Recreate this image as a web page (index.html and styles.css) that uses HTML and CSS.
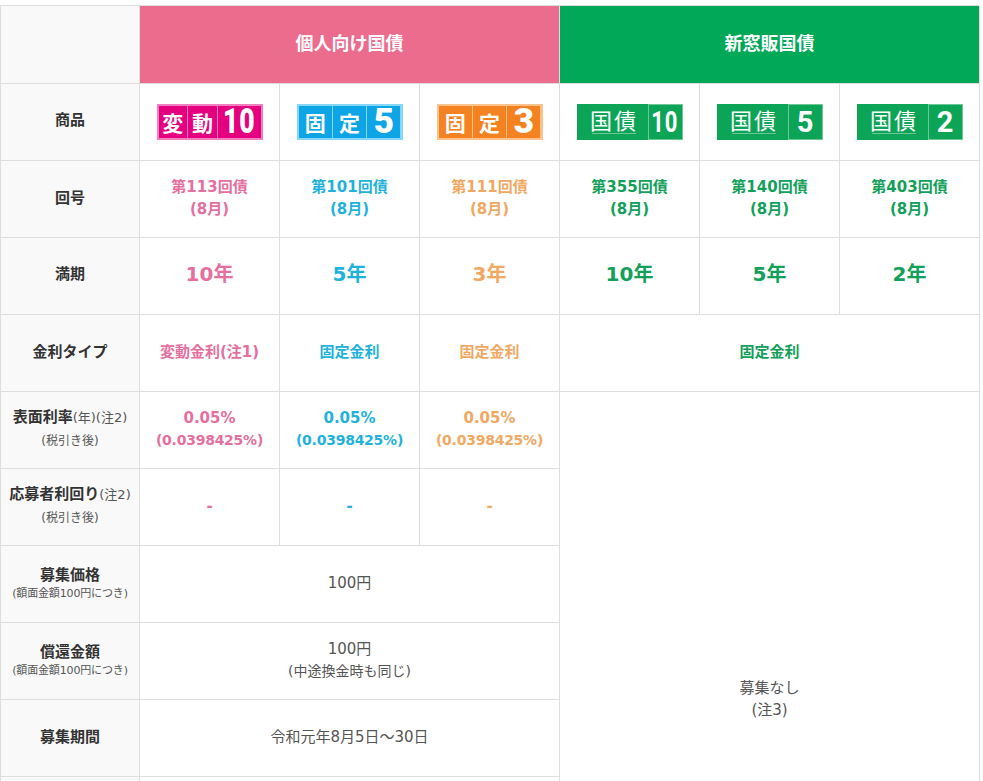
FILE: index.html
```html
<!DOCTYPE html>
<html lang="ja">
<head>
<meta charset="utf-8">
<title>個人向け国債・新窓販国債</title>
<link rel="stylesheet" href="styles.css">
</head>
<body>
<table class="bonds">
<colgroup><col class="c0"><col class="c"><col class="c"><col class="c"><col class="c"><col class="c"><col class="c"></colgroup>
<tr class="top">
  <th class="side"></th>
  <th colspan="3" class="head-pink">個人向け国債</th>
  <th colspan="3" class="head-green">新窓販国債</th>
</tr>
<tr>
  <th class="side lift">商品</th>
  <td class="logo-cell"><div class="logo logo-tri bg-magenta"><span>変</span><span>動</span><span class="num"><b class="narrow">10</b></span></div></td>
  <td class="logo-cell"><div class="logo logo-tri bg-blue"><span>固</span><span>定</span><span class="num"><b>5</b></span></div></td>
  <td class="logo-cell"><div class="logo logo-tri bg-orange"><span>固</span><span>定</span><span class="num"><b>3</b></span></div></td>
  <td class="logo-cell"><div class="logo logo-jgb"><span class="jgb">国債</span><span class="num"><b class="narrow">10</b></span></div></td>
  <td class="logo-cell"><div class="logo logo-jgb"><span class="jgb">国債</span><span class="num"><b>5</b></span></div></td>
  <td class="logo-cell"><div class="logo logo-jgb"><span class="jgb">国債</span><span class="num"><b>2</b></span></div></td>
</tr>
<tr>
  <th class="side">回号</th>
  <td class="val pink">第113回債<br>(8月)</td>
  <td class="val blue">第101回債<br>(8月)</td>
  <td class="val orange">第111回債<br>(8月)</td>
  <td class="val green">第355回債<br>(8月)</td>
  <td class="val green">第140回債<br>(8月)</td>
  <td class="val green">第403回債<br>(8月)</td>
</tr>
<tr>
  <th class="side lift">満期</th>
  <td class="term pink">10年</td>
  <td class="term blue">5年</td>
  <td class="term orange">3年</td>
  <td class="term green">10年</td>
  <td class="term green">5年</td>
  <td class="term green">2年</td>
</tr>
<tr>
  <th class="side">金利タイプ</th>
  <td class="val pink">変動金利(注1)</td>
  <td class="val blue">固定金利</td>
  <td class="val orange">固定金利</td>
  <td colspan="3" class="val green">固定金利</td>
</tr>
<tr>
  <th class="side">表面利率<span class="note">(年)(注2)</span><br><span class="sub">(税引き後)</span></th>
  <td class="val pink">0.05%<br><span class="rate">(0.0398425%)</span></td>
  <td class="val blue">0.05%<br><span class="rate">(0.0398425%)</span></td>
  <td class="val orange">0.05%<br><span class="rate">(0.0398425%)</span></td>
  <td rowspan="8" colspan="3">募集なし<br>(注3)</td>
</tr>
<tr>
  <th class="side">応募者利回り<span class="note">(注2)</span><br><span class="sub">(税引き後)</span></th>
  <td class="val pink">-</td>
  <td class="val blue">-</td>
  <td class="val orange">-</td>
</tr>
<tr>
  <th class="side">募集価格<br><span class="tiny">(額面金額100円につき)</span></th>
  <td colspan="3">100円</td>
</tr>
<tr>
  <th class="side">償還金額<br><span class="tiny">(額面金額100円につき)</span></th>
  <td colspan="3">100円<br><span class="paren">(中途換金時も同じ)</span></td>
</tr>
<tr>
  <th class="side">募集期間</th>
  <td colspan="3">令和元年8月5日～30日</td>
</tr>
<tr><th class="side"></th><td colspan="3"></td></tr>
<tr><th class="side"></th><td colspan="3"></td></tr>
<tr><th class="side"></th><td colspan="3"></td></tr>
</table>
</body>
</html>
```

FILE: styles.css
```css
html, body {
  margin: 0;
  background: #fff;
  overflow: hidden;
  height: 781px;
}
body {
  padding: 5px 0 0 0;
  box-sizing: border-box;
  font-family: "DejaVu Sans", "Noto Sans CJK JP", sans-serif;
  font-size: 15px;
  color: #555;
}
.bonds {
  border-collapse: collapse;
  table-layout: fixed;
  width: 979px;
  line-height: 22px;
}
.c0 { width: 139px; }
.c { width: 140px; }
.bonds tr { height: 77px; }
.bonds tr.top { height: 78px; }
.bonds th, .bonds td {
  border: 1px solid #ddd;
  padding: 0 0 2px;
  text-align: center;
  vertical-align: middle;
}
.bonds td { font-weight: 400; }
.bonds td.logo-cell { padding: 0; }
.bonds th.lift { padding-bottom: 4px; }
.side {
  background: #f9f9f9;
  font-weight: 700;
  font-size: 15px;
  color: #333;
}
.note { font-weight: 400; font-size: 13px; color: #555; }
.sub { font-weight: 400; font-size: 12px; color: #555; }
.tiny { display: block; font-weight: 400; font-size: 11px; line-height: 16px; color: #555; letter-spacing: -0.15px; }
.paren { font-size: 14px; }
.head-pink, .head-green { color: #fff; font-size: 18px; font-weight: 700; }
.head-pink { background: #ec6c8e; border-color: #ec6c8e; }
.head-green { background: #00a858; border-color: #00a858; }
.val { font-weight: 700 !important; font-size: 15px; }
.rate { font-size: 14px; letter-spacing: -0.25px; }
.bonds td.term { font-weight: 700; font-size: 20px; padding-bottom: 4px; }
.pink { color: #e56f9e; }
.blue { color: #1fb2dc; }
.orange { color: #f1a862; }
.green { color: #12a05a; }

.logo {
  display: flex;
  width: 106px;
  height: 36px;
  margin: 0 auto;
  box-sizing: border-box;
  color: #fff;
  font-family: "Noto Sans CJK JP", sans-serif;
  line-height: 1;
  font-weight: 700;
}
.logo-tri { gap: 1px; padding: 2px; }
.logo-tri span {
  flex: 1;
  display: flex;
  align-items: center;
  justify-content: center;
  font-size: 21px;
}
.bg-magenta { background: #f17ec0; }
.bg-magenta span { background: #e4007f; }
.bg-blue { background: #86d6f5; }
.bg-blue span { background: #0ea5e6; }
.bg-orange { background: #fbc28c; }
.bg-orange span { background: #f58220; }
.logo .num b {
  display: block;
  font-family: "Roboto", sans-serif;
  font-weight: 900;
  font-size: 35px;
  line-height: 34px;
}
.logo .num b.narrow { transform: scaleX(0.76); letter-spacing: 1px; }
.logo-jgb { background: #0ca557; }
.logo-jgb span { display: flex; align-items: center; justify-content: center; }
.jgb {
  flex: 1;
  padding: 0 0 6px 4px;
  font-weight: 400;
  font-size: 22px;
  letter-spacing: 2px;
  background: linear-gradient(#6cc596, #6cc596) no-repeat 15px 29px / 44px 1px;
}
.logo-jgb .num {
  width: 35px;
  box-sizing: border-box;
  border: 1px solid #6dc797;
}
.logo-jgb .num b { font-size: 29px; font-weight: 700; }
```
